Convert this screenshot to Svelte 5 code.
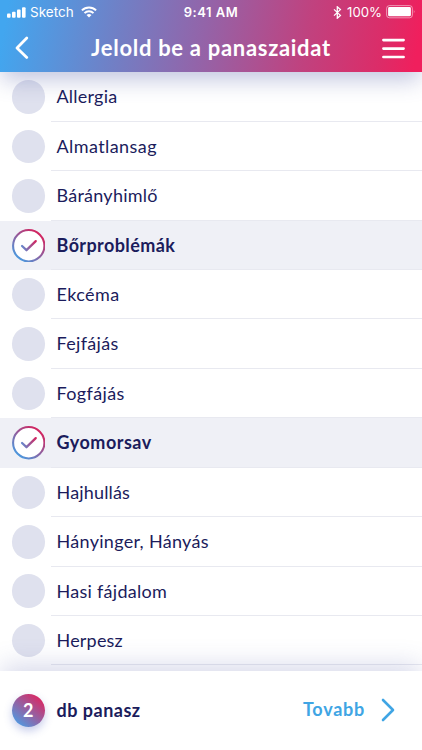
<script>
  const complaints = [
    { name: 'Allergia', spacing: 0.22 },
    { name: 'Almatlansag', spacing: 0.42 },
    { name: 'Bárányhimlő', spacing: 0.25 },
    { name: 'Bőrproblémák', spacing: 0.4, selected: true },
    { name: 'Ekcéma', spacing: 0.4 },
    { name: 'Fejfájás', spacing: 0.32 },
    { name: 'Fogfájás', spacing: 0.38 },
    { name: 'Gyomorsav', spacing: 0.5, selected: true },
    { name: 'Hajhullás', spacing: 0.17 },
    { name: 'Hányinger, Hányás', spacing: 0.3 },
    { name: 'Hasi fájdalom', spacing: 0.28 },
    { name: 'Herpesz', spacing: 0.2 }
  ];
  const count = complaints.filter((c) => c.selected).length;
</script>

<div class="screen">
  <header>
    <div class="status">
      <div class="carrier">
        <svg class="signal" width="19" height="11" viewBox="0 0 19 11" fill="#fff">
          <rect x="0" y="6.5" width="3.6" height="4.2" rx="1" />
          <rect x="5" y="4.7" width="3.6" height="6" rx="1" />
          <rect x="10" y="2.6" width="3.6" height="8.1" rx="1" />
          <rect x="15" y="0.2" width="3.6" height="10.5" rx="1" />
        </svg>
        <span class="network">Sketch</span>
        <svg class="wifi" width="16" height="12" viewBox="0 0 16 12" fill="none" stroke="#fff" stroke-width="2">
          <path d="M.9 4.4a10.2 10.2 0 0 1 14.2 0M3.5 7.1a6.5 6.5 0 0 1 9 0" />
          <path d="M5.5 9.1a3.6 3.6 0 0 1 5 0L8 11.6z" fill="#fff" stroke="none" />
        </svg>
      </div>
      <span class="time">9:41 AM</span>
      <div class="power">
        <svg class="bluetooth" width="9" height="13" viewBox="0 0 9 13" fill="none" stroke="#fff" stroke-width="1.3">
          <path d="M1 3.4l6.4 6L4.3 12.2V.8l3.1 2.8L1 9.6" />
        </svg>
        <span class="percent">100%</span>
        <svg class="battery" width="30" height="14" viewBox="0 0 30 14">
          <rect x=".6" y=".6" width="25.8" height="12.2" rx="2.8" fill="none" stroke="#fff" stroke-opacity=".5" />
          <rect x="2.1" y="2.1" width="22.8" height="9.2" rx="1.3" fill="#fff" />
          <path d="M27.8 4.8q1.6 1.9 0 3.8z" fill="#fff" fill-opacity=".5" />
        </svg>
      </div>
    </div>
    <nav>
      <svg class="back" width="14" height="24" viewBox="0 0 14 24" fill="none" stroke="#fff" stroke-width="2.8" stroke-linecap="round" stroke-linejoin="round">
        <path d="M11.8 2L2 12l9.8 9.4" />
      </svg>
      <h1>Jelold be a panaszaidat</h1>
      <svg class="menu" width="24" height="22" viewBox="0 0 24 22" stroke="#fff" stroke-width="2.6" stroke-linecap="round">
        <path d="M2.4 2.1h20.2M2.4 10.6h20.2M2.4 19h20.2" />
      </svg>
    </nav>
  </header>

  <main>
    {#each complaints as item}
      <div class="row" class:selected={item.selected}>
        <span class="mark">
          {#if item.selected}
            <svg width="34" height="34" viewBox="0 0 34 34" fill="none">
              <defs>
                <linearGradient id="ring" x1="5" y1="31" x2="27" y2="4" gradientUnits="userSpaceOnUse">
                  <stop stop-color="#459ee4" /><stop offset="1" stop-color="#d3245f" />
                </linearGradient>
                <linearGradient id="tick" x1="9" y1="20" x2="25" y2="14" gradientUnits="userSpaceOnUse">
                  <stop stop-color="#5a91d7" /><stop offset="1" stop-color="#d3245f" />
                </linearGradient>
              </defs>
              <circle cx="17" cy="17" r="15.9" fill="#fff" stroke="url(#ring)" stroke-width="2.1" />
              <path d="M10.2 17.2l4.5 4.3 9.4-9.2" stroke="url(#tick)" stroke-width="2.3" stroke-linecap="round" stroke-linejoin="round" />
            </svg>
          {/if}
        </span>
        <span class="label"><span style="letter-spacing:{item.spacing}px">{item.name}</span></span>
      </div>
    {/each}
  </main>

  <footer>
    <span class="count">{count}</span>
    <span class="unit">db panasz</span>
    <span class="next">Tovabb</span>
    <svg class="forward" width="14" height="24" viewBox="0 0 14 24" fill="none" stroke="#40a5e4" stroke-width="2.6" stroke-linecap="round" stroke-linejoin="round">
      <path d="M2 2l10 10L2 22" />
    </svg>
  </footer>
</div>

<style>
  .screen {
    width: 422px;
    height: 750px;
    display: flex;
    flex-direction: column;
    overflow: hidden;
    background: #fff;
    color: #1b1c5c;
    font-family: Lato, sans-serif;
  }
  header {
    position: relative;
    z-index: 2;
    height: 72px;
    flex: none;
    color: #fff;
    background: linear-gradient(100deg, #42a6ef 2%, #7080c6 28%, #9364a9 48%, #c0427f 72%, #dc2c68 90%, #f01f5d 98%);
    box-shadow: 0 10px 22px -2px rgba(70, 82, 160, 0.33);
  }
  .status {
    display: grid;
    grid-template-columns: 1fr auto 1fr;
    align-items: center;
    height: 24px;
    font: 13.5px/24px Inter, sans-serif;
  }
  .carrier, .power { display: flex; align-items: center; }
  .signal { margin-left: 7px; }
  .network { margin-left: 4px; font-size: 13.5px; }
  .wifi { margin-left: 7px; }
  .time { font-weight: 600; font-size: 13px; letter-spacing: 0.5px; }
  .power { justify-content: flex-end; padding-right: 6px; }
  .bluetooth { margin-right: 1px; }
  .percent { margin: 0 4px; font-size: 13.2px; }
  nav { display: flex; align-items: center; height: 48px; }
  .back { margin-left: 15px; }
  h1 {
    margin: 0 0 0 62px;
    font-size: 22px;
    line-height: 48px;
    font-weight: 700;
    letter-spacing: 0.7px;
    white-space: nowrap;
  }
  .menu { margin: 2px 17px 0 auto; }
  main { flex: 1; min-height: 0; overflow: hidden; padding-top: 0.3px; }
  .row { height: 49.43px; display: flex; align-items: center; }
  .mark {
    width: 33.5px;
    height: 33.5px;
    margin-left: 11.5px;
    border-radius: 50%;
    background: #dfe1ee;
    flex: none;
  }
  .mark svg { display: block; width: 33.5px; height: 33.5px; }
  .label {
    margin-left: 6px;
    padding-left: 5.5px;
    box-sizing: border-box;
    height: 100%;
    flex: 1;
    border-bottom: 1px solid #e8e9f0;
    font-size: 18px;
    line-height: 48px;
    white-space: nowrap;
  }
  .selected { background: #eff0f6; }
  .selected .mark { background: none; }
  .selected .label { font-weight: 700; }
  footer {
    position: relative;
    z-index: 2;
    height: 79px;
    flex: none;
    display: flex;
    align-items: center;
    background: #fff;
    box-shadow: 0 -8px 24px -2px rgba(70, 82, 160, 0.21);
    font-size: 18px;
    font-weight: 700;
  }
  .count {
    width: 33.5px;
    height: 33.5px;
    margin-left: 11.5px;
    border-radius: 50%;
    background: linear-gradient(40deg, #4a9ee6 8%, #d32d69 84%);
    box-shadow: 0 4px 9px rgba(70, 90, 190, 0.3);
    color: #fff;
    text-align: center;
    line-height: 33px;
  }
  .unit { margin: 0 0 2px 11.5px; letter-spacing: 0.5px; }
  .next { margin: 0 0 3px auto; color: #40a5e4; letter-spacing: 0.75px; }
  .forward { margin: 0 27px 2px 16px; }
</style>
